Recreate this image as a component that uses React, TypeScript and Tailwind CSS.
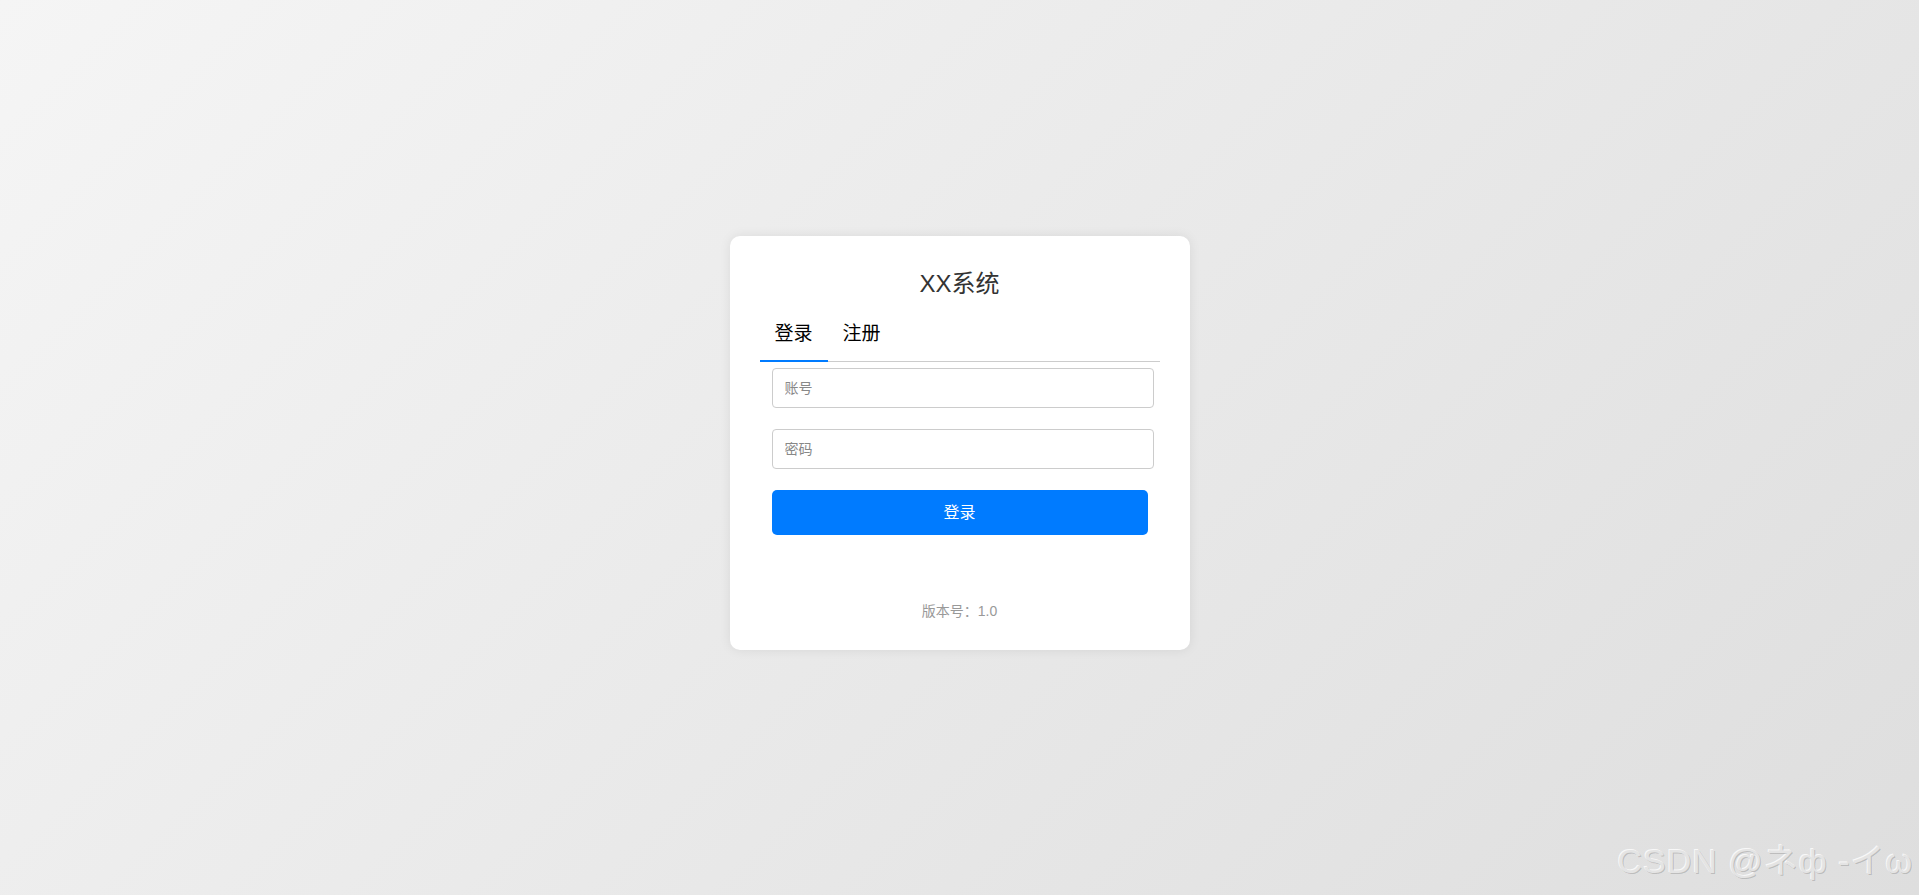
import { useState } from 'react'

export default function App() {
    const [tab, setTab] = useState<'login' | 'register'>('login')

    return (
        <div
            className="relative flex h-[895px] w-full items-start justify-center bg-[linear-gradient(135deg,#f5f5f5_0%,#dedede_100%)] pt-[236px]"
            style={{ fontFamily: '"Liberation Sans", Arial, "Noto Sans CJK SC", sans-serif' }}
        >
            <div className="flex h-[414px] w-[460px] flex-col rounded-[10px] bg-white px-[30px] pt-[30px] shadow-[0_0_12px_rgba(0,0,0,0.08)]">
                <h1 className="text-center text-[24px] leading-[36px] text-[#333]">XX系统</h1>

                {/* Tabs */}
                <div className="mt-[10px] flex border-b border-[#ccc]">
                    <button
                        onClick={() => setTab('login')}
                        className={`-mb-px border-b-2 px-[15px] pb-[12px] pt-[8px] text-[19px] leading-[28px] text-black ${tab === 'login' ? 'border-[#007bff]' : 'border-transparent'}`}
                    >
                        登录
                    </button>
                    <button
                        onClick={() => setTab('register')}
                        className={`-mb-px border-b-2 px-[15px] pb-[12px] pt-[8px] text-[19px] leading-[28px] text-black ${tab === 'register' ? 'border-[#007bff]' : 'border-transparent'}`}
                    >
                        注册
                    </button>
                </div>

                <div className="flex flex-col pl-[12px] pt-[6px]">
                    <input
                        type="text"
                        placeholder="账号"
                        className="h-[40px] w-[382px] rounded-[4px] border border-[#ccc] px-[12px] text-[14px] outline-none placeholder:text-[#888]"
                    />
                    <input
                        type="password"
                        placeholder="密码"
                        className="mt-[21px] h-[40px] w-[382px] rounded-[4px] border border-[#ccc] px-[12px] text-[14px] outline-none placeholder:text-[#888]"
                    />
                    <button className="mt-[21px] h-[45px] w-[376px] rounded-[5px] bg-[#007bff] text-[16px] text-white">
                        登录
                    </button>
                </div>

                <p className="mt-[66px] text-center text-[14px] leading-[20px] text-[#999]">版本号：1.0</p>
            </div>

            {/* Watermark */}
            <div className="absolute bottom-[14px] right-[6px] whitespace-nowrap text-[34px] leading-[40px] tracking-[1px] text-[#e4e4e4] [text-shadow:1px_1px_0_rgba(0,0,0,0.18),-1px_-1px_0_rgba(255,255,255,0.8)]">
                CSDN @ネф -イω
            </div>
        </div>
    )
}
